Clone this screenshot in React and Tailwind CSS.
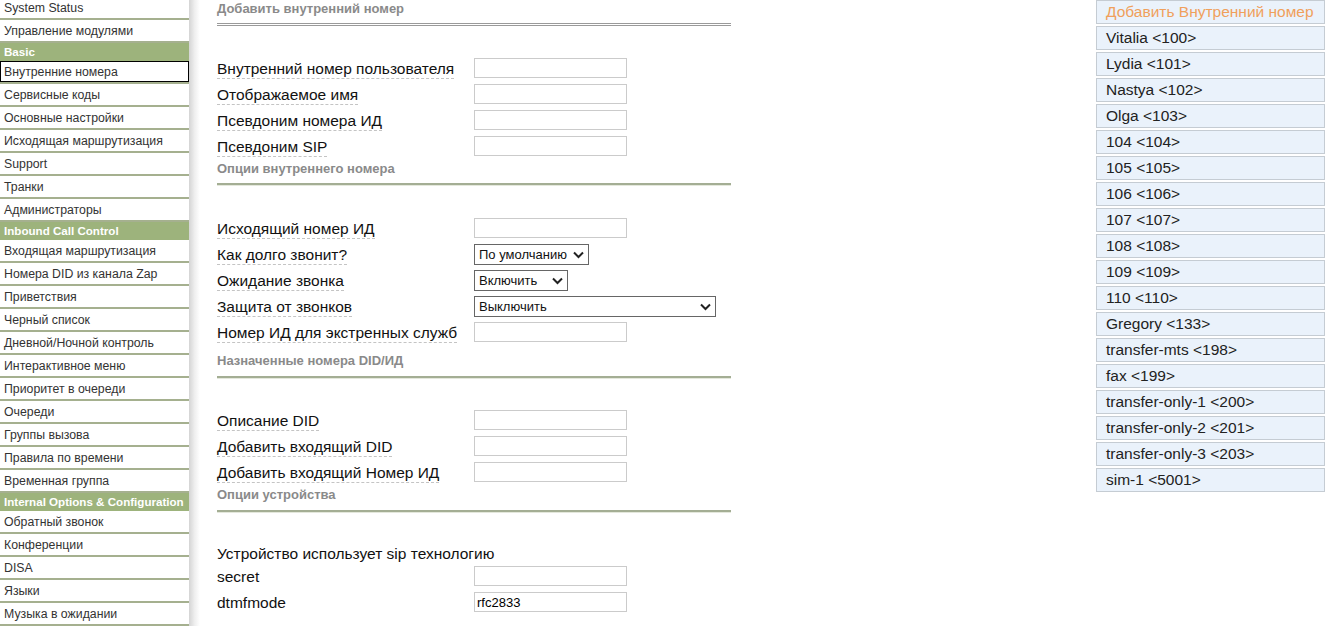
const menu = [
  { t: "System Status" },
  { t: "Управление модулями" },
  { t: "Basic", h: true },
  { t: "Внутренние номера", active: true },
  { t: "Сервисные коды" },
  { t: "Основные настройки" },
  { t: "Исходящая маршрутизация" },
  { t: "Support" },
  { t: "Транки" },
  { t: "Администраторы" },
  { t: "Inbound Call Control", h: true },
  { t: "Входящая маршрутизация" },
  { t: "Номера DID из канала Zap" },
  { t: "Приветствия" },
  { t: "Черный список" },
  { t: "Дневной/Ночной контроль" },
  { t: "Интерактивное меню" },
  { t: "Приоритет в очереди" },
  { t: "Очереди" },
  { t: "Группы вызова" },
  { t: "Правила по времени" },
  { t: "Временная группа" },
  { t: "Internal Options & Configuration", h: true },
  { t: "Обратный звонок" },
  { t: "Конференции" },
  { t: "DISA" },
  { t: "Языки" },
  { t: "Музыка в ожидании" },
];

const extensions = [
  "Vitalia <100>",
  "Lydia <101>",
  "Nastya <102>",
  "Olga <103>",
  "104 <104>",
  "105 <105>",
  "106 <106>",
  "107 <107>",
  "108 <108>",
  "109 <109>",
  "110 <110>",
  "Gregory <133>",
  "transfer-mts <198>",
  "fax <199>",
  "transfer-only-1 <200>",
  "transfer-only-2 <201>",
  "transfer-only-3 <203>",
  "sim-1 <5001>",
];

function Chevron() {
  return (
    <svg width="11" height="8" viewBox="0 0 11 8" className="absolute right-[4px] top-[6px]">
      <path d="M1 1.5 L5.5 6 L10 1.5" fill="none" stroke="#222" strokeWidth="2" />
    </svg>
  );
}

function Label({ children, plain }) {
  return (
    <span
      className={
        "inline-block leading-[18px] " +
        (plain ? "" : "border-b border-dashed border-[#c4c4c4]")
      }
    >
      {children}
    </span>
  );
}

function Row({ label, children, plain }) {
  return (
    <div className="flex h-[26px] items-center">
      <div className="w-[257px] pt-[1px]">
        <Label plain={plain}>{label}</Label>
      </div>
      {children}
    </div>
  );
}

function Input({ value }) {
  return (
    <input
      readOnly
      value={value || ""}
      className="h-[20px] w-[153px] border border-[#cbcbcb] bg-white px-[2px] text-[13px] text-black outline-none"
    />
  );
}

function Select({ value, w }) {
  return (
    <div className={"relative h-[21px] border border-[#666] bg-white " + w}>
      <div className="pl-[4px] text-[13px] leading-[19px] text-[#111]">{value}</div>
      <Chevron />
    </div>
  );
}

function SectionTitle({ children, className }) {
  return (
    <div className={"h-[18px] text-[13px] font-bold leading-[18px] text-[#8a8a8a] " + className}>
      {children}
    </div>
  );
}

function GreenLine({ className }) {
  return (
    <div className={"w-[514px] border-t-2 border-[#a4ae94] border-b border-b-[#e4e8dc] " + className} />
  );
}

export default function App() {
  return (
    <div
      className="flex h-[626px] w-[1342px] overflow-hidden bg-white"
      style={{ fontFamily: '"Liberation Sans", Arial, sans-serif' }}
    >
      {/* sidebar */}
      <div className="flex">
        <div className="-mt-[3px] w-[189px]">
          {menu.map((m) =>
            m.h ? (
              <div
                key={m.t}
                className="h-[18px] bg-[#9db37c] pl-[4px] text-[11.6px] font-bold leading-[18px] text-white whitespace-nowrap"
              >
                {m.t}
              </div>
            ) : (
              <div key={m.t} className="border-b-2 border-[#a5b08f] bg-white">
                <div
                  className={
                    "h-[21px] overflow-hidden pl-[3px] pt-[2px] text-[12.3px] leading-[17px] text-[#333] whitespace-nowrap border " +
                    (m.active ? "border-black" : "border-transparent")
                  }
                >
                  {m.t}
                </div>
              </div>
            )
          )}
        </div>
        <div className="w-[11px] bg-gradient-to-r from-[#d4d4d4] via-[#eeeeee] to-white" />
      </div>

      {/* main form */}
      <div className="w-[896px] pl-[17px] text-[15.5px] text-[#111]">
        <SectionTitle>Добавить внутренний номер</SectionTitle>
        <div className="mt-[5px] w-[514px] border-t-[3px] border-double border-[#9a9a9a]" />

        <div className="mt-[29px]">
          <Row label="Внутренний номер пользователя"><Input /></Row>
          <Row label="Отображаемое имя"><Input /></Row>
          <Row label="Псевдоним номера ИД"><Input /></Row>
          <Row label="Псевдоним SIP"><Input /></Row>
        </div>

        <SectionTitle className="mt-[1px]">Опции внутреннего номера</SectionTitle>
        <GreenLine className="mt-[5px]" />

        <div className="mt-[29px]">
          <Row label="Исходящий номер ИД"><Input /></Row>
          <Row label="Как долго звонит?"><Select value="По умолчанию" w="w-[115px]" /></Row>
          <Row label="Ожидание звонка"><Select value="Включить" w="w-[94px]" /></Row>
          <Row label="Защита от звонков"><Select value="Выключить" w="w-[242px]" /></Row>
          <Row label="Номер ИД для экстренных служб"><Input /></Row>
        </div>

        <SectionTitle className="mt-[7px]">Назначенные номера DID/ИД</SectionTitle>
        <GreenLine className="mt-[6px]" />

        <div className="mt-[28px]">
          <Row label="Описание DID"><Input /></Row>
          <Row label="Добавить входящий DID"><Input /></Row>
          <Row label="Добавить входящий Номер ИД"><Input /></Row>
        </div>

        <SectionTitle className="mt-[1px]">Опции устройства</SectionTitle>
        <GreenLine className="mt-[6px]" />

        <div className="mt-[30px]">
          <div className="flex h-[20px] items-center pt-[1px]">
            <Label plain>Устройство использует sip технологию</Label>
          </div>
          <Row label="secret" plain><Input /></Row>
          <Row label="dtmfmode" plain><Input value="rfc2833" /></Row>
        </div>
      </div>

      {/* extension list */}
      <div className="flex w-[229px] flex-col gap-[2px]">
        <div className="h-[24px] border border-[#c5ccd3] bg-[#eaf2fb] pl-[9px] text-[15.5px] leading-[22px] text-[#f0a05c] whitespace-nowrap">
          Добавить Внутренний номер
        </div>
        {extensions.map((e) => (
          <div
            key={e}
            className="h-[24px] border border-[#c5ccd3] bg-[#eaf2fb] pl-[9px] text-[15.5px] leading-[22px] text-[#222] whitespace-nowrap"
          >
            {e}
          </div>
        ))}
      </div>
    </div>
  );
}
